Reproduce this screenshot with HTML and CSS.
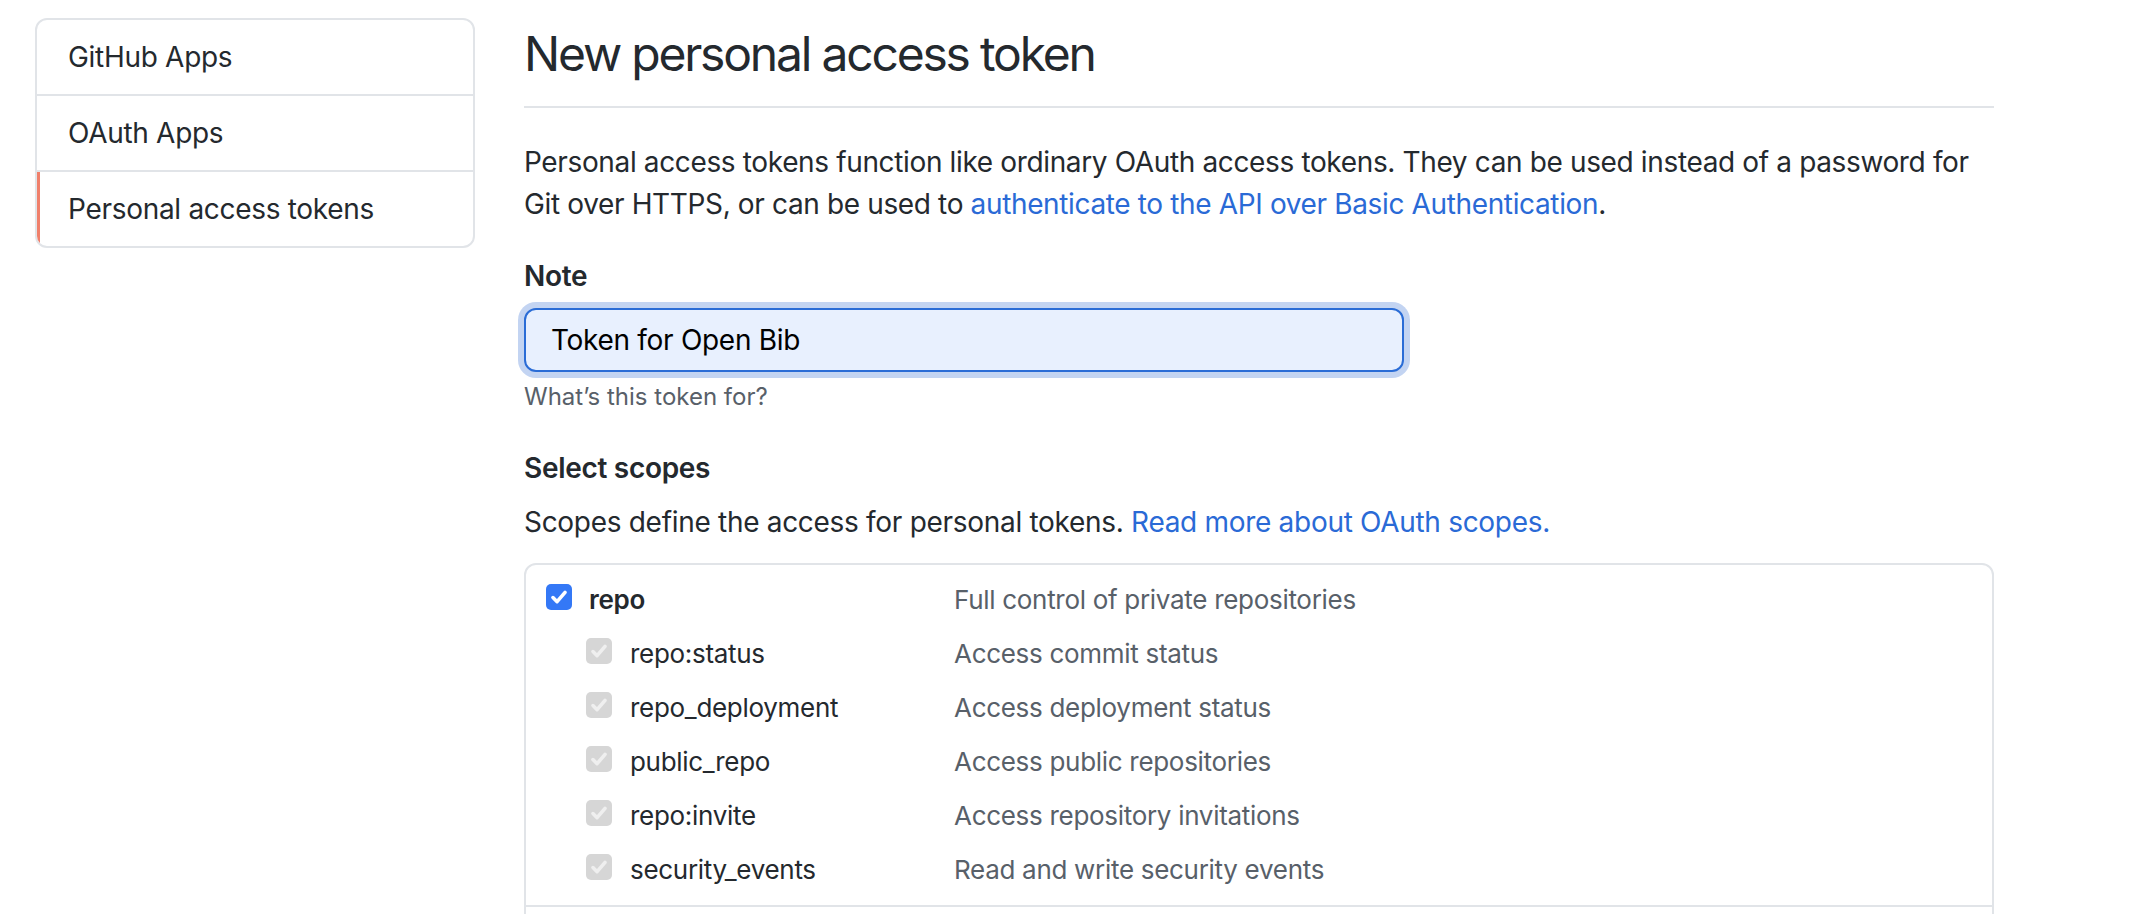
FILE: index.html
```html
<!DOCTYPE html>
<html lang="en">
<head>
<meta charset="utf-8">
<title>New personal access token</title>
<link rel="stylesheet" href="styles.css">
</head>
<body>
<div class="layout">
  <nav class="menu">
    <a class="menu-item" href="#">GitHub Apps</a>
    <a class="menu-item" href="#">OAuth Apps</a>
    <a class="menu-item selected" href="#">Personal access tokens</a>
  </nav>
  <main class="main">
    <div class="subhead">
      <h2 class="subhead-heading">New personal access token</h2>
    </div>
    <p class="intro">Personal access tokens function like ordinary OAuth access tokens. They can be used instead of a password for Git over HTTPS, or can be used to <a class="link" href="#">authenticate to the API over Basic Authentication</a>.</p>

    <label class="field-label" for="note">Note</label>
    <input class="note-input" id="note" type="text" value="Token for Open Bib">
    <p class="note-hint">What’s this token for?</p>

    <h3 class="field-label scopes-title">Select scopes</h3>
    <p class="scopes-intro">Scopes define the access for personal tokens. <a class="link" href="#">Read more about OAuth scopes.</a></p>

    <div class="scopes-box">
      <div class="scope-group">
        <div class="scope-row">
          <span class="scope-name"><span class="cb cb-on"><svg viewBox="0 0 16 16"><path d="M3.6 8.4 L6.6 11.4 L12.4 4.6"/></svg></span><strong>repo</strong></span>
          <span class="scope-desc">Full control of private repositories</span>
        </div>
        <div class="scope-row child">
          <span class="scope-name"><span class="cb cb-off"><svg viewBox="0 0 16 16"><path d="M3.6 8.4 L6.6 11.4 L12.4 4.6"/></svg></span>repo:status</span>
          <span class="scope-desc">Access commit status</span>
        </div>
        <div class="scope-row child">
          <span class="scope-name"><span class="cb cb-off"><svg viewBox="0 0 16 16"><path d="M3.6 8.4 L6.6 11.4 L12.4 4.6"/></svg></span>repo_deployment</span>
          <span class="scope-desc">Access deployment status</span>
        </div>
        <div class="scope-row child">
          <span class="scope-name"><span class="cb cb-off"><svg viewBox="0 0 16 16"><path d="M3.6 8.4 L6.6 11.4 L12.4 4.6"/></svg></span>public_repo</span>
          <span class="scope-desc">Access public repositories</span>
        </div>
        <div class="scope-row child">
          <span class="scope-name"><span class="cb cb-off"><svg viewBox="0 0 16 16"><path d="M3.6 8.4 L6.6 11.4 L12.4 4.6"/></svg></span>repo:invite</span>
          <span class="scope-desc">Access repository invitations</span>
        </div>
        <div class="scope-row child">
          <span class="scope-name"><span class="cb cb-off"><svg viewBox="0 0 16 16"><path d="M3.6 8.4 L6.6 11.4 L12.4 4.6"/></svg></span>security_events</span>
          <span class="scope-desc">Read and write security events</span>
        </div>
      </div>
      <div class="scope-group next-group"></div>
    </div>
  </main>
</div>
</body>
</html>
```

FILE: styles.css
```css
html, body {
  margin: 0;
  padding: 0;
  background: #ffffff;
  overflow: hidden;
}

body {
  font-family: Inter, "Noto Sans", "Liberation Sans", sans-serif;
  font-size: 28px;
  line-height: 42px;
  letter-spacing: -0.3px;
  color: #24292e;
}

.layout {
  display: flex;
  align-items: flex-start;
  gap: 49px;
  padding: 18px 0 0 35px;
}

/* Sidebar menu */
.menu {
  width: 440px;
  flex: none;
  box-sizing: border-box;
  border: 2px solid #e1e4e8;
  border-radius: 12px;
  overflow: hidden;
  display: flex;
  flex-direction: column;
}

.menu-item {
  position: relative;
  display: block;
  padding: 16px 31px;
  color: #24292e;
  text-decoration: none;
}

.menu-item + .menu-item {
  border-top: 2px solid #e1e4e8;
}

.menu-item.selected::before {
  content: "";
  position: absolute;
  left: -1px;
  top: 0;
  bottom: 0;
  width: 4px;
  background: #f0806b;
}

/* Main column */
.main {
  width: 1470px;
  flex: none;
}

.subhead {
  padding: 6px 0 22px;
  border-bottom: 2px solid #e1e4e8;
}

.subhead-heading {
  margin: 0;
  font-size: 48px;
  line-height: 60px;
  font-weight: 400;
  letter-spacing: -2.2px;
}

.intro {
  margin: 33px 0 0;
  letter-spacing: -0.36px;
}

.link {
  color: #2a6ad6;
  text-decoration: none;
}

.field-label {
  display: block;
  margin: 30px 0 0;
  font-size: 28px;
  line-height: 42px;
  font-weight: 600;
}

.note-input {
  display: block;
  box-sizing: border-box;
  width: 880px;
  height: 64px;
  margin: 11px 0 0;
  padding: 0 25px;
  border: 2px solid #2a6cd6;
  border-radius: 12px;
  background: #e8f0fe;
  box-shadow: 0 0 0 6px #c3d4f2;
  font-family: inherit;
  font-size: 28px;
  letter-spacing: -0.3px;
  color: #000000;
  outline: none;
}

.note-hint {
  margin: 7px 0 0;
  font-size: 24px;
  line-height: 36px;
  letter-spacing: 0;
  color: #586069;
}

.scopes-title {
  margin-top: 32px;
}

.scopes-intro {
  margin: 12px 0 0;
}

/* Scopes box */
.scopes-box {
  margin-top: 20px;
  border: 2px solid #e1e4e8;
  border-radius: 12px;
}

.scope-group {
  display: flex;
  flex-direction: column;
  gap: 12px;
  padding: 14px 0 14px 20px;
}

.scope-group + .scope-group {
  border-top: 2px solid #e1e4e8;
}

.next-group {
  height: 40px;
}

.scope-row {
  display: flex;
  align-items: center;
  height: 42px;
  font-size: 26px;
}

.scope-name {
  display: flex;
  align-items: center;
  width: 408px;
  flex: none;
  box-sizing: border-box;
}

.scope-name strong {
  font-weight: 600;
}

.child .scope-name {
  padding-left: 40px;
}

.scope-desc {
  color: #586069;
}

.cb {
  display: inline-flex;
  align-items: center;
  justify-content: center;
  width: 26px;
  height: 26px;
  box-sizing: border-box;
  border-radius: 5px;
  margin: 0 17px 6px 0;
  flex: none;
}

.child .cb {
  margin-right: 18px;
}

.cb svg {
  width: 22px;
  height: 22px;
  fill: none;
  stroke-width: 2.6;
  stroke-linecap: round;
  stroke-linejoin: round;
}

.cb-on {
  background: #3478f6;
}

.cb-on svg {
  stroke: #ffffff;
}

.cb-off {
  background: #d6d6d6;
}

.cb-off svg {
  stroke: #efefef;
}
```
